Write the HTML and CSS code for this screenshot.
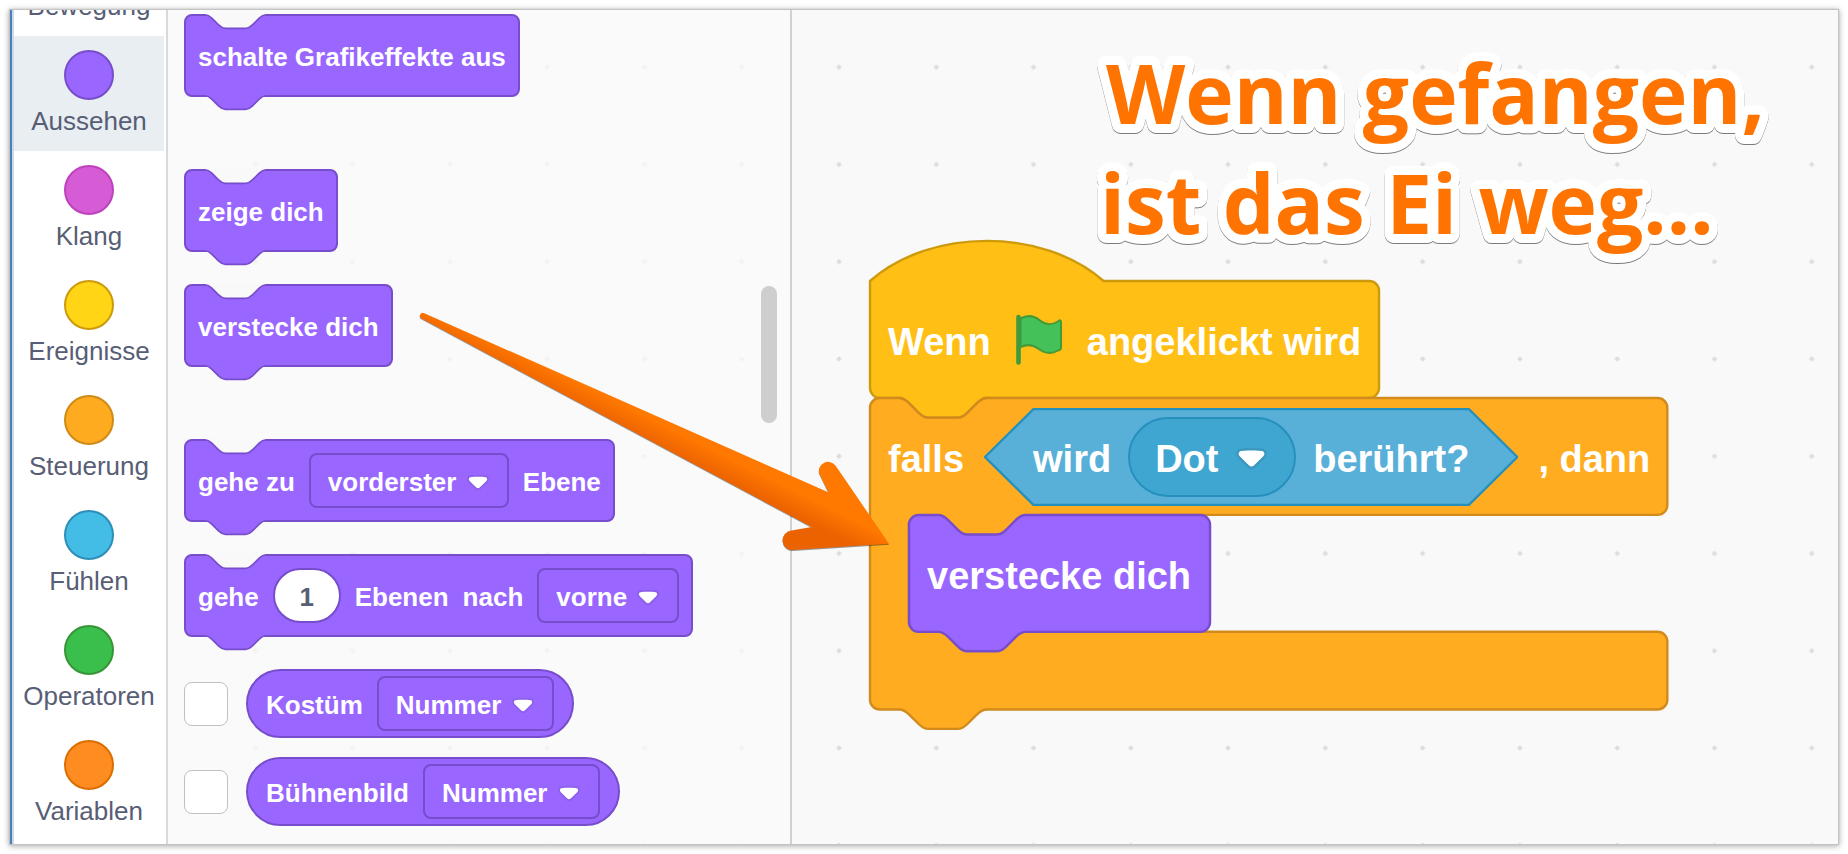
FILE: index.html
```html
<!DOCTYPE html>
<html lang="de">
<head>
<meta charset="utf-8">
<title>Wenn gefangen, ist das Ei weg...</title>
<link rel="stylesheet" href="styles.css">
</head>
<body>
<svg class="defs" aria-hidden="true">
  <defs>
    <symbol id="notch" viewBox="0 -1 36 10">
      <path class="joint-fill" d="M0 0c2 0 3 1 4 2l4 4c1 1 2 2 4 2h12c2 0 3-1 4-2l4-4c1-1 2-2 4-2V-1H0z"/>
      <path class="joint-line" d="M0 0c2 0 3 1 4 2l4 4c1 1 2 2 4 2h12c2 0 3-1 4-2l4-4c1-1 2-2 4-2"/>
    </symbol>
    <symbol id="caret" viewBox="0 0 12.710 8.790">
      <path d="M12.710 2.440A2.410 2.410 0 0 1 12 4.160L8.080 8.080a2.450 2.450 0 0 1-3.450 0L.72 4.160A2.420 2.420 0 0 1 0 2.440 2.480 2.480 0 0 1 .71.71C1 .47 1.430 0 6.360 0S11.750.46 12 .71A2.440 2.440 0 0 1 12.710 2.440z" fill="#231f20" opacity=".1"/>
      <path d="M6.360 7.790a1.430 1.430 0 0 1-1-.42L1.420 3.450a1.440 1.440 0 0 1 0-2c.56-.56 9.310-.56 9.870 0a1.440 1.440 0 0 1 0 2L7.370 7.370A1.430 1.430 0 0 1 6.360 7.790z" fill="#fff"/>
    </symbol>
  </defs>
</svg>

<main class="editor">
  <nav class="categories" aria-label="Kategorien">
    <button class="category motion"><i class="bubble"></i><span>Bewegung</span></button>
    <button class="category looks selected"><i class="bubble"></i><span>Aussehen</span></button>
    <button class="category sound"><i class="bubble"></i><span>Klang</span></button>
    <button class="category events"><i class="bubble"></i><span>Ereignisse</span></button>
    <button class="category control"><i class="bubble"></i><span>Steuerung</span></button>
    <button class="category sensing"><i class="bubble"></i><span>Fühlen</span></button>
    <button class="category operators"><i class="bubble"></i><span>Operatoren</span></button>
    <button class="category variables"><i class="bubble"></i><span>Variablen</span></button>
  </nav>

  <div class="board">
    <svg class="dots" aria-hidden="true">
      <defs>
        <pattern id="grid" x="38.800" y="8.500" width="97.270" height="97.270" patternUnits="userSpaceOnUse">
          <path d="M48.600 46.200l2.500 2.500-2.500 2.500-2.500-2.500z" fill="#dcdcdc" stroke="#dcdcdc" stroke-width=".6"/>
        </pattern>
      </defs>
      <rect width="100%" height="100%" fill="url(#grid)"/>
    </svg>

    <section class="palette" aria-label="Blöcke">
      <div class="group">
        <div class="block">
          <svg class="joint top"><use href="#notch"/></svg>
          <span class="label">schalte Grafikeffekte aus</span>
          <svg class="joint bottom"><use href="#notch"/></svg>
        </div>
      </div>
      <div class="group">
        <div class="block">
          <svg class="joint top"><use href="#notch"/></svg>
          <span class="label">zeige dich</span>
          <svg class="joint bottom"><use href="#notch"/></svg>
        </div>
        <div class="block">
          <svg class="joint top"><use href="#notch"/></svg>
          <span class="label">verstecke dich</span>
          <svg class="joint bottom"><use href="#notch"/></svg>
        </div>
      </div>
      <div class="group">
        <div class="block">
          <svg class="joint top"><use href="#notch"/></svg>
          <span class="label">gehe zu</span>
          <span class="dropdown">
            <select aria-label="Ebene"><option>vorderster</option></select>
            <svg class="caret"><use href="#caret"/></svg>
          </span>
          <span class="label">Ebene</span>
          <svg class="joint bottom"><use href="#notch"/></svg>
        </div>
        <div class="block">
          <svg class="joint top"><use href="#notch"/></svg>
          <span class="label">gehe</span>
          <input class="number" type="text" value="1" aria-label="Anzahl Ebenen">
          <span class="label">Ebenen</span>
          <span class="label">nach</span>
          <span class="dropdown">
            <select aria-label="Richtung"><option>vorne</option></select>
            <svg class="caret"><use href="#caret"/></svg>
          </span>
          <svg class="joint bottom"><use href="#notch"/></svg>
        </div>
        <div class="reporters">
          <div class="reporter-row">
            <input class="check" type="checkbox" aria-label="Kostüm anzeigen">
            <div class="reporter">
              <span class="label">Kostüm</span>
              <span class="dropdown">
                <select aria-label="Kostüm"><option>Nummer</option></select>
                <svg class="caret"><use href="#caret"/></svg>
              </span>
            </div>
          </div>
          <div class="reporter-row">
            <input class="check" type="checkbox" aria-label="Bühnenbild anzeigen">
            <div class="reporter">
              <span class="label">Bühnenbild</span>
              <span class="dropdown">
                <select aria-label="Bühnenbild"><option>Nummer</option></select>
                <svg class="caret"><use href="#caret"/></svg>
              </span>
            </div>
          </div>
        </div>
      </div>
      <div class="scrollbar"></div>
    </section>

    <section class="workspace" aria-label="Skripte">
      <div class="script">
        <div class="hat">
          <svg class="shape" viewBox="0 0 510 117" aria-hidden="true">
            <path d="M0 0c60.800-53.500 172.800-53.500 233.600 0H499.300a9.730 9.730 0 0 1 9.730 9.730V107.100a9.730 9.730 0 0 1-9.730 9.730H9.730A9.730 9.730 0 0 1 0 107.100z" fill="#ffbf15" stroke="#cc9a0c" stroke-width="2.400"/>
          </svg>
          <span class="label">Wenn</span>
          <svg class="flag" viewBox="0 0 46 52" role="img" aria-label="grüne Flagge">
            <path d="M4.500 4.500C11 1 18 1.500 24 6.500S36 11 42 7.500Q45 5 45 8V34Q45 36 42 36.500C35 40.500 28 39 22 34.500S10 30.500 4.500 33z" fill="#45c15a" stroke="#459a38" stroke-width="2"/>
            <path d="M2.500 3v45.500" stroke="#3f9a3f" stroke-width="4.600" stroke-linecap="round"/>
          </svg>
          <span class="label">angeklickt wird</span>
        </div>

        <div class="if">
          <svg class="shape" viewBox="0 0 800 334" aria-hidden="true">
            <path d="M0 9.730A9.730 9.730 0 0 1 9.730 0H29.200c4.860 0 7.300 2.430 9.730 4.860l9.730 9.730c2.430 2.430 4.860 4.860 9.730 4.860h29.200c4.860 0 7.300-2.430 9.730-4.860l9.730-9.730c2.430-2.430 4.860-4.860 9.730-4.860H787.600a9.730 9.730 0 0 1 9.730 9.730V107.100a9.730 9.730 0 0 1-9.730 9.730H48.600A9.730 9.730 0 0 0 38.900 126.500V224a9.730 9.730 0 0 0 9.730 9.730H787.600a9.730 9.730 0 0 1 9.730 9.730V301.700a9.730 9.730 0 0 1-9.730 9.730H116.800c-4.860 0-7.300 2.430-9.730 4.860l-9.730 9.730c-2.430 2.430-4.860 4.860-9.730 4.860H58.400c-4.860 0-7.300-2.430-9.730-4.860l-9.730-9.730c-2.430-2.430-4.860-4.860-9.730-4.860H9.730A9.730 9.730 0 0 1 0 301.700z" fill="#ffac20" stroke="#d18b1d" stroke-width="2.400"/>
            <path d="M30 -3H116L107 4.500L97.300 14.600c-2 2-4.500 4.400-9.700 4.400H58.400c-5.200 0-7.700-2.400-9.700-4.400L38.900 4.900z" fill="#ffbf15"/>
            <path d="M29.200 0c4.860 0 7.300 2.430 9.730 4.860l9.730 9.730c2.430 2.430 4.860 4.860 9.730 4.860h29.200c4.860 0 7.300-2.430 9.730-4.860l9.730-9.730c2.430-2.430 4.860-4.860 9.730-4.860" fill="none" stroke="#d18b1d" stroke-width="2.400"/>
            <path d="M38 114H170V118H156C150 118 146 123 136 133Q133 136.300 126 136.300H97Q91 136.300 87 133L72 119H50L39 127z" fill="#ffac20"/>
          </svg>
          <div class="if-head">
            <span class="label">falls</span>
            <div class="condition">
              <svg class="hex" viewBox="0 0 533 98" preserveAspectRatio="none" aria-hidden="true">
                <path d="M1 49L49.500 1H483.500L532 49L483.500 97H49.500z" fill="#58b0d8" stroke="#2690bd" stroke-width="2.400"/>
              </svg>
              <span class="label">wird</span>
              <span class="dropdown round">
                <select aria-label="Objekt"><option>Dot</option></select>
                <svg class="caret"><use href="#caret"/></svg>
              </span>
              <span class="label">berührt?</span>
            </div>
            <span class="label">, dann</span>
          </div>
          <div class="if-body">
            <div class="inner">
              <svg class="shape" viewBox="0 0 301 137" aria-hidden="true">
                <path d="M0 9.730A9.730 9.730 0 0 1 9.730 0H29.200c4.860 0 7.300 2.430 9.730 4.860l9.730 9.730c2.430 2.430 4.860 4.860 9.730 4.860h29.200c4.860 0 7.300-2.430 9.730-4.860l9.730-9.730c2.430-2.430 4.860-4.860 9.730-4.860H291.300a9.730 9.730 0 0 1 9.730 9.730V107.100a9.730 9.730 0 0 1-9.730 9.730H116.800c-4.860 0-7.300 2.430-9.730 4.860l-9.730 9.730c-2.430 2.430-4.860 4.860-9.730 4.860H58.400c-4.860 0-7.300-2.430-9.730-4.860l-9.730-9.730c-2.430-2.430-4.860-4.860-9.730-4.860H9.730A9.730 9.730 0 0 1 0 107.100z" fill="#9966ff" stroke="#774dcb" stroke-width="2.400"/>
              </svg>
              <span class="label">verstecke dich</span>
            </div>
          </div>
        </div>
      </div>

      <h1 class="caption">
        <svg viewBox="0 0 700 240">
          <text><tspan x="16" y="94">Wenn gefangen,</tspan><tspan x="10" y="204">ist das Ei weg...</tspan></text>
        </svg>
      </h1>
    </section>

    <svg class="arrow" viewBox="0 0 480 250" aria-hidden="true">
      <defs>
        <linearGradient id="arrow-shade" gradientUnits="userSpaceOnUse" x1="293" y1="135" x2="283" y2="155">
          <stop offset="0" stop-color="#ff7800"/>
          <stop offset="1" stop-color="#eb6200"/>
        </linearGradient>
      </defs>
      <path d="M14.300 3.200L418.300 182.300L409 163A9.300 9.300 0 0 1 425.500 155.500L479 233.700L383 240A9.700 9.700 0 0 1 381.500 220.600L401.700 217L11.500 8.600A3 3 0 0 1 14.300 3.200z" fill="url(#arrow-shade)"/>
    </svg>
  </div>
</main>
</body>
</html>
```

FILE: styles.css
```css
* {
  box-sizing: border-box;
}

body {
  margin: 0;
  padding: 10px;
  height: 100vh;
  background: #fff;
  font-family: "Liberation Sans", Arial, sans-serif;
  color: #575e75;
}

button,
input,
select {
  margin: 0;
  font: inherit;
  color: inherit;
  appearance: none;
}

.defs {
  position: absolute;
  width: 0;
  height: 0;
}

.editor {
  display: flex;
  height: 100%;
  border-left: 2px solid #4a7fb8;
  background: #f9f9f9;
  box-shadow: 0 0 1px 1px #c4c4c4, 0 1px 6px 1px rgba(0, 0, 0, 0.35);
}

/* Category column */

.categories {
  display: flex;
  flex: none;
  flex-direction: column;
  justify-content: flex-end;
  width: 156px;
  padding: 0 2px 3px 0;
  overflow: hidden;
  border-left: 2px solid #cdd9ea;
  border-right: 2px solid #d9d9d9;
  background: #fff;
}

.category {
  display: flex;
  flex: none;
  flex-direction: column;
  align-items: center;
  gap: 6px;
  padding: 14px 0 15px;
  border: 0;
  background: none;
  font-size: 26px;
  line-height: 30px;
}

.category.selected {
  background: #e9eef2;
}

.bubble {
  width: 50px;
  height: 50px;
  border: 2px solid;
  border-radius: 50%;
}

.motion .bubble { background: #4c97ff; border-color: #3373cc; }
.looks .bubble { background: #9966ff; border-color: #774dcb; }
.sound .bubble { background: #d65cd6; border-color: #bd42bd; }
.events .bubble { background: #ffd515; border-color: #cc9a0c; }
.control .bubble { background: #ffab1f; border-color: #cf8b17; }
.sensing .bubble { background: #43bde6; border-color: #2e8eb8; }
.operators .bubble { background: #3abf4d; border-color: #389438; }
.variables .bubble { background: #ff8c21; border-color: #db6e00; }

/* Board */

.board {
  position: relative;
  display: flex;
  flex: 1;
  min-width: 0;
  overflow: hidden;
}

.dots {
  position: absolute;
  inset: 0;
  width: 100%;
  height: 100%;
}

.label {
  white-space: pre;
}

/* Palette */

.palette {
  position: relative;
  display: flex;
  flex: none;
  flex-direction: column;
  gap: 72px;
  width: 624px;
  padding: 4px 16px;
  border-right: 2px solid #d1d1d1;
  background: rgba(249, 249, 249, 0.75);
  color: #fff;
  font-size: 26px;
  font-weight: bold;
  line-height: 30px;
}

.palette .label {
  padding-top: 3px;
}

.group {
  display: flex;
  flex-direction: column;
  align-items: flex-start;
  gap: 32px;
}

.block {
  position: relative;
  display: flex;
  align-items: center;
  gap: 14px;
  height: 83px;
  padding: 0 12px;
  border: 2px solid #774dcb;
  border-radius: 8px;
  background: #9966ff;
}

.joint {
  position: absolute;
  left: 19px;
  width: 61px;
  height: 17px;
}

.joint.top {
  top: -3px;
  fill: #f9f9f9;
}

.joint.bottom {
  top: calc(100% - 1px);
  fill: #9966ff;
}

.joint-line {
  fill: none;
  stroke: #774dcb;
  stroke-width: 1;
}

.dropdown {
  position: relative;
  display: flex;
  align-items: center;
}

.dropdown select {
  height: 55px;
  padding: 3px 50px 0 17px;
  border: 2px solid #774dcb;
  border-radius: 8px;
  background: #9966ff;
}

.caret {
  position: absolute;
  right: 20px;
  width: 22px;
  height: 15px;
  margin-top: 3px;
}

.number {
  width: 68px;
  height: 55px;
  padding: 3px 0 0;
  border: 2px solid #774dcb;
  border-radius: 28px;
  background: #fff;
  color: #575e75;
  text-align: center;
}

.reporters {
  display: flex;
  flex-direction: column;
  gap: 19px;
}

.reporter-row {
  display: flex;
  align-items: center;
  gap: 18px;
}

.check {
  width: 44px;
  height: 44px;
  border: 1px solid #c0c0c0;
  border-radius: 8px;
  background: #fff;
}

.reporter {
  display: flex;
  align-items: center;
  gap: 14px;
  height: 69px;
  padding: 0 18px;
  border: 2px solid #774dcb;
  border-radius: 35px;
  background: #9966ff;
}

.scrollbar {
  position: absolute;
  top: 276px;
  right: 13px;
  width: 16px;
  height: 137px;
  border-radius: 8px;
  background: #cecece;
}

/* Workspace */

.workspace {
  position: relative;
  flex: 1;
  min-width: 0;
}

.script {
  position: absolute;
  top: 271px;
  left: 78px;
  color: #fff;
  font-size: 38px;
  font-weight: bold;
  line-height: 42px;
}

.script .label {
  padding-top: 4px;
}

.shape {
  position: absolute;
  top: 0;
  left: 0;
  width: 100%;
  overflow: visible;
}

.hat {
  position: relative;
  display: flex;
  align-items: center;
  gap: 25px;
  width: 510px;
  height: 117px;
  padding-left: 18px;
}

.hat .label,
.if-head .label,
.inner .label {
  position: relative;
}

.flag {
  position: relative;
  width: 46px;
  height: 52px;
}

.if {
  position: relative;
  width: 800px;
}

.if-head {
  position: relative;
  display: flex;
  align-items: center;
  gap: 20px;
  height: 117px;
  padding-left: 18px;
}

.condition {
  position: relative;
  display: flex;
  align-items: center;
  gap: 17px;
  height: 98px;
  padding: 0 49px;
}

.hex {
  position: absolute;
  inset: 0;
  width: 100%;
  height: 100%;
}

.dropdown.round select {
  height: 80px;
  padding: 4px 75px 0 25px;
  border-color: #2690bd;
  border-radius: 40px;
  background: #3fa6d1;
}

.dropdown.round .caret {
  right: 29px;
  width: 31px;
  height: 21px;
  margin-top: 4px;
}

.if-body {
  padding-left: 39px;
}

.inner {
  position: relative;
  display: flex;
  align-items: center;
  width: 301px;
  height: 117px;
  padding-left: 18px;
}

.caption {
  position: absolute;
  top: 20px;
  left: 298px;
  width: 700px;
  margin: 0;
}

.caption svg {
  display: block;
  overflow: visible;
  filter: drop-shadow(0 1px 0 rgba(0, 0, 0, 0.5));
}

.caption text {
  fill: #ff7300;
  stroke: #fff;
  stroke-width: 18px;
  stroke-linejoin: round;
  paint-order: stroke;
  font: bold 82px "Open Sans", sans-serif;
}

/* Pointer from the palette block to its place in the script */

.arrow {
  position: absolute;
  top: 300px;
  left: 242px;
  width: 480px;
  height: 250px;
  filter: drop-shadow(0 1px 0 rgba(0, 0, 0, 0.4));
  pointer-events: none;
}
```
